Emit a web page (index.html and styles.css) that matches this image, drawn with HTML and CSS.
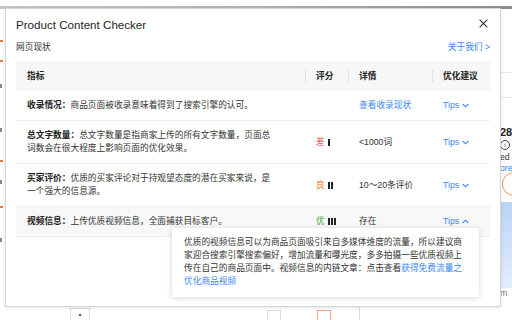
FILE: index.html
```html
<!DOCTYPE html>
<html lang="zh-CN">
<head>
    <meta charset="UTF-8">
    <meta name="viewport" content="width=device-width, initial-scale=1.0">
    <title>Product Content Checker</title>
    <link rel="stylesheet" href="styles.css">
</head>
<body>
    <!-- 背后的页面 -->
    <div class="page">
        <div class="topbar"></div>
        <div class="page-body">
            <div class="rail-left">
                <i class="mark orange m1"></i>
                <i class="mark orange m2"></i>
                <i class="mark grey m3"></i>
                <i class="mark grey m4"></i>
                <i class="mark orange m5"></i>
                <i class="mark grey m6"></i>
                <i class="mark orange m7"></i>
                <i class="mark grey m8"></i>
            </div>
            <div class="center">
                <div class="pager">
                    <span class="pg-btn">&#9650;</span>
                    <span class="pg-box"></span>
                    <span class="pg-box active"></span>
                    <span class="pg-line"></span>
                </div>
            </div>
            <div class="rail-right">
                <div class="rr-line first"></div>
                <div class="rr-line"></div>
                <div class="rr-num">28</div>
                <div class="rr-info">i</div>
                <div class="rr-text">ed</div>
                <div class="rr-link">ore</div>
                <div class="rr-ring"></div>
                <div class="rr-card"></div>
                <div class="rr-foot">m</div>
            </div>
        </div>
    </div>

    <!-- 弹窗 -->
    <div class="modal">
        <div class="modal-head">
            <h1 class="modal-title">Product Content Checker</h1>
            <button class="close" type="button">
                <svg width="9" height="9" viewBox="0 0 9 9"><path d="M0.6 0.6L8.4 8.4M8.4 0.6L0.6 8.4" stroke="#333" stroke-width="1.1" fill="none"/></svg>
            </button>
        </div>
        <div class="subhead">
            <span>网页现状</span>
            <a class="link" href="#">关于我们 &gt;</a>
        </div>

        <table class="grid">
            <colgroup>
                <col class="w-ind"><col class="w-score"><col class="w-detail"><col class="w-tip">
            </colgroup>
            <thead>
                <tr><th>指标</th><th>评分</th><th>详情</th><th>优化建议</th></tr>
            </thead>
            <tbody>
                <tr>
                    <td class="c-ind"><b>收录情况：</b>商品页面被收录意味着得到了搜索引擎的认可。</td>
                    <td></td>
                    <td><a class="link" href="#">查看收录现状</a></td>
                    <td><a class="tips" href="#">Tips <svg width="7" height="5" viewBox="0 0 7 5"><path d="M0.7 1L3.5 3.8L6.3 1" stroke="currentColor" stroke-width="1.1" fill="none"/></svg></a></td>
                </tr>
                <tr>
                    <td class="c-ind"><b>总文字数量：</b>总文字数量是指商家上传的所有文字数量，页面总<br>词数会在很大程度上影响页面的优化效果。</td>
                    <td><span class="score bad">差<i class="bars"><b></b></i></span></td>
                    <td>&lt;1000词</td>
                    <td><a class="tips" href="#">Tips <svg width="7" height="5" viewBox="0 0 7 5"><path d="M0.7 1L3.5 3.8L6.3 1" stroke="currentColor" stroke-width="1.1" fill="none"/></svg></a></td>
                </tr>
                <tr>
                    <td class="c-ind"><b>买家评价：</b>优质的买家评论对于持观望态度的潜在买家来说，是<br>一个强大的信息源。</td>
                    <td><span class="score mid">良<i class="bars"><b></b><b></b></i></span></td>
                    <td>10～20条评价</td>
                    <td><a class="tips" href="#">Tips <svg width="7" height="5" viewBox="0 0 7 5"><path d="M0.7 1L3.5 3.8L6.3 1" stroke="currentColor" stroke-width="1.1" fill="none"/></svg></a></td>
                </tr>
                <tr class="open">
                    <td class="c-ind"><b>视频信息：</b>上传优质视频信息，全面捕获目标客户。</td>
                    <td><span class="score good">优<i class="bars"><b></b><b></b><b></b></i></span></td>
                    <td>存在</td>
                    <td><a class="tips" href="#">Tips <svg width="7" height="5" viewBox="0 0 7 5"><path d="M0.7 4L3.5 1.2L6.3 4" stroke="currentColor" stroke-width="1.1" fill="none"/></svg></a></td>
                </tr>
            </tbody>
        </table>

        <div class="popover">
            优质的视频信息可以为商品页面吸引来自多媒体维度的流量，所以建议商家迎合搜索引擎搜索偏好，增加流量和曝光度，多多拍摄一些优质视频上传在自己的商品页面中。视频信息的内链文章：点击查看<a class="link" href="#">获得免费流量之优化商品视频</a>
        </div>
    </div>
</body>
</html>
```

FILE: styles.css
```css
body{
    margin: 0;
    width: 512px;
    height: 320px;
    overflow: hidden;
    position: relative;
    background-color: #fff;
    color: #333;
    font-family: "Liberation Sans", "Noto Sans CJK SC", sans-serif;
    font-size: 8.7px;
}

/* 背后的页面 */
.topbar{
    height: 3px;
    margin-top: 6px;
    background: linear-gradient(90deg, #c4c4c4 0%, #b4b4b4 50%, #8c8c8c 100%);
}
.page-body{
    display: flex;
    height: 311px;
}
.rail-left{
    width: 6px;
    display: flex;
    flex-direction: column;
    overflow: hidden;
}
.mark{
    display: block;
    width: 3px;
    height: 2px;
}
.mark.orange{ background-color: #f0783c; }
.mark.grey{ background-color: #888; height: 4px; width: 2px; }
.m1{ margin-top: 31px; }
.m2{ margin-top: 18px; }
.m3{ margin-top: 22px; }
.m4{ margin-top: 40px; }
.m5{ margin-top: 28px; }
.m6{ margin-top: 18px; }
.m7{ margin-top: 22px; }
.m8{ margin-top: 30px; }

.center{
    width: 494px;
    display: flex;
    flex-direction: column;
    justify-content: flex-end;
}
.pager{
    display: flex;
    align-items: flex-end;
    height: 13px;
    padding-left: 64px;
}
.pg-btn{
    width: 20px;
    height: 12px;
    border: 1px solid #ddd;
    border-bottom: none;
    box-sizing: border-box;
    font-size: 5px;
    color: #555;
    text-align: center;
    line-height: 10px;
}
.pg-box{
    width: 14px;
    height: 10px;
    margin-left: 177px;
    border: 1px solid #ddd;
    border-bottom: none;
    box-sizing: border-box;
}
.pg-box.active{
    margin-left: 36px;
    border-color: #f4a27a;
}
.pg-line{
    width: 1px;
    height: 13px;
    margin-left: 28px;
    background-color: #ddd;
}

.rail-right{
    width: 12px;
    display: flex;
    flex-direction: column;
    overflow: hidden;
    white-space: nowrap;
}
.rr-line{
    height: 1px;
    margin-top: 24px;
    background-color: #e8e8e8;
}
.rr-line.first{ margin-top: 63px; }
.rr-num{
    margin-top: 28px;
    font-size: 11px;
    font-weight: bold;
    line-height: 12px;
    color: #222;
}
.rr-info{
    width: 8px;
    height: 8px;
    margin-top: 2px;
    border: 1px solid #444;
    border-radius: 50%;
    font-size: 6px;
    line-height: 8px;
    text-align: center;
}
.rr-text{
    margin-top: 2px;
    line-height: 11px;
}
.rr-link{
    line-height: 11px;
    color: #3b86f5;
}
.rr-ring{
    width: 22px;
    height: 22px;
    margin-top: -2px;
    margin-left: 2px;
    border: 1px solid #f29060;
    border-radius: 50%;
    flex-shrink: 0;
}
.rr-card{
    height: 86px;
    margin-top: 6px;
    flex-shrink: 0;
    background: linear-gradient(180deg, #bcd3f7, #e4edfb);
}
.rr-foot{
    line-height: 11px;
    color: #777;
}

/* 弹窗 */
.modal{
    position: absolute;
    left: 6px;
    top: 9px;
    width: 494px;
    height: 297px;
    box-sizing: border-box;
    padding: 9px 10px 0;
    background-color: #fff;
    box-shadow: 0 0 0 1px #d6d6d6, 0 1px 4px rgba(0, 0, 0, .18);
}
.modal-head{
    display: flex;
    justify-content: space-between;
}
.modal-title{
    margin: 0;
    font-size: 11.6px;
    font-weight: normal;
    line-height: 14px;
    color: #1e1e1e;
}
.close{
    align-self: flex-start;
    margin: 1px 2px 0 0;
    padding: 0;
    border: none;
    background: none;
    display: flex;
}
.subhead{
    display: flex;
    justify-content: space-between;
    margin-top: 9px;
    line-height: 13px;
}
.link{
    color: #3b86f5;
    text-decoration: none;
}

.grid{
    width: 474px;
    margin-top: 7px;
    border-collapse: collapse;
    table-layout: fixed;
}
.w-ind{ width: 289px; }
.w-score{ width: 43px; }
.w-detail{ width: 84px; }
.w-tip{ width: 58px; }
.grid th{
    position: relative;
    padding: 8.5px 11px;
    line-height: 13px;
    text-align: left;
    font-weight: 600;
    color: #222;
    background-color: #f7f7f7;
}
.grid th + th::before{
    content: "";
    position: absolute;
    left: 0;
    top: 9px;
    width: 1px;
    height: 12px;
    background-color: #e2e2e2;
}
.grid td{
    padding: 8px 11px;
    line-height: 13px;
    vertical-align: middle;
    border-bottom: 1px solid #efefef;
}
.grid td.c-ind{
    padding-right: 30px;
}
.grid b{
    font-weight: 600;
    color: #222;
}
.grid tr.open td{
    background-color: #f8f8f8;
}

.score{
    display: inline-flex;
    align-items: center;
    gap: 3px;
}
.score.bad{ color: #e4453a; }
.score.mid{ color: #ee7b2e; }
.score.good{ color: #3d9a34; }
.bars{
    display: inline-flex;
    gap: 1px;
}
.bars b{
    display: block;
    width: 2px;
    height: 7px;
    background-color: currentColor;
}

.tips{
    display: inline-flex;
    align-items: center;
    gap: 3px;
    color: #3b86f5;
    text-decoration: none;
}

.popover{
    position: absolute;
    left: 166px;
    top: 219px;
    width: 280px;
    padding: 8px 15px 9px 12px;
    line-height: 13px;
    background-color: #fff;
    box-shadow: 0 1px 6px rgba(0, 0, 0, .16);
}
```
